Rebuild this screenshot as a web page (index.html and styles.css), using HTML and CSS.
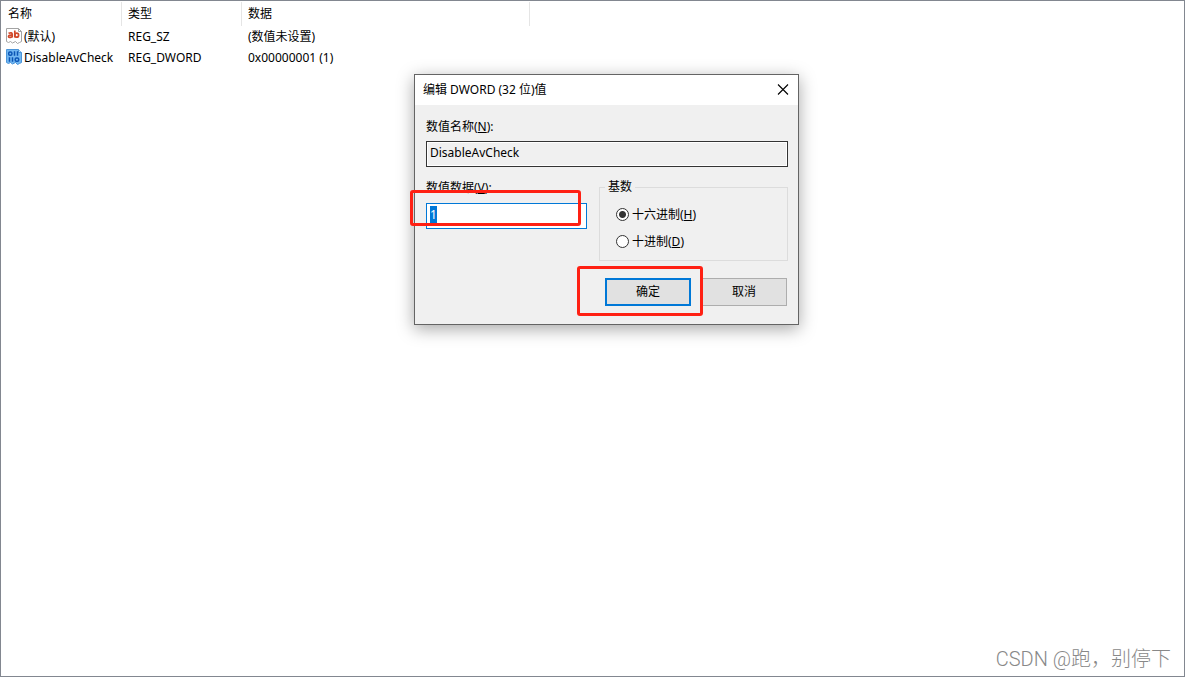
FILE: index.html
```html
<!DOCTYPE html>
<html lang="zh-CN">
<head>
<meta charset="utf-8">
<title>编辑 DWORD (32 位)值</title>
<link rel="stylesheet" href="styles.css">
</head>
<body>
<main class="pane">
  <table class="values">
    <colgroup><col class="col-name"><col class="col-type"><col class="col-data"><col></colgroup>
    <thead>
      <tr><th>名称</th><th>类型</th><th>数据</th><td></td></tr>
    </thead>
    <tbody>
      <tr>
        <td><span class="entry"><svg class="icon" width="16" height="16" viewBox="0 0 16 16" aria-hidden="true"><path d="M.5.5h12l3 3v10l-2 1-2 1-2-2-3 1.500-2-1.500-2 1-2-1z" fill="#fff" stroke="#a3a3a3"/><path d="M12.500.5v3h3" fill="none" stroke="#a3a3a3"/><g fill="none" stroke="#d2492a" stroke-width="1.700"><path d="M2.500 5.300q3.700-1.400 3.700 1v3.200M6.200 7.200q-3.700-.3-3.700 1.200 0 2 3.700.3"/><path d="M8.800 2.500v7"/><ellipse cx="10.700" cy="7.200" rx="1.900" ry="2"/></g></svg><span>(默认)</span></span></td>
        <td>REG_SZ</td><td>(数值未设置)</td><td></td>
      </tr>
      <tr>
        <td><span class="entry"><svg class="icon" width="16" height="16" viewBox="0 0 16 16" aria-hidden="true"><path d="M.5.5h12l3 3v10l-2 1-2 1-2-2-3 1.500-2-1.500-2 1-2-1z" fill="#72b7f2" stroke="#4a94d8"/><path d="M12.500.5v3h3" fill="#b5dbfa" stroke="#4a94d8"/><g fill="none" stroke="#0b55b5" stroke-width="1.500"><rect x="2.700" y="3" width="3.200" height="3.200" rx="1.300"/><path d="M8.500 2.300v4.500M11.500 2.300v4.500M3.500 8.300v4.500M6.500 8.300v4.500"/><rect x="9.200" y="9" width="3.500" height="3.200" rx="1.300"/></g></svg><span>DisableAvCheck</span></span></td>
        <td>REG_DWORD</td><td>0x00000001 (1)</td><td></td>
      </tr>
    </tbody>
  </table>

  <section class="dialog" role="dialog" aria-labelledby="dialog-title">
    <header class="titlebar">
      <h1 class="title" id="dialog-title">编辑 DWORD (32 位)值</h1>
      <button class="close" type="button" aria-label="关闭"><svg width="12" height="12" viewBox="0 0 12 12" aria-hidden="true"><path d="M1 .5l10 10M11 .5L1 10.500" fill="none" stroke="#000" stroke-width="1.100"/></svg></button>
    </header>
    <form class="form">
      <label class="label" for="value-name">数值名称(<u>N</u>):</label>
      <input class="field readonly" id="value-name" type="text" value="DisableAvCheck" readonly>
      <div class="row">
        <div class="data">
          <label class="label" for="value-data">数值数据(<u>V</u>):</label>
          <div class="edit">
            <input class="field active" id="value-data" type="text" value="1">
            <span class="mark mark-data"></span>
          </div>
        </div>
        <fieldset class="base">
          <legend>基数</legend>
          <label class="option"><input class="radio" type="radio" name="base" checked><span>十六进制(<u>H</u>)</span></label>
          <label class="option"><input class="radio" type="radio" name="base"><span>十进制(<u>D</u>)</span></label>
        </fieldset>
      </div>
      <div class="actions">
        <button class="button" type="button">取消</button>
        <div class="confirm">
          <button class="button primary" type="button">确定</button>
          <span class="mark mark-ok"></span>
        </div>
      </div>
    </form>
  </section>

  <p class="watermark">CSDN @跑，别停下</p>
</main>
<script src="script.js"></script>
</body>
</html>
```

FILE: styles.css
```css
* { box-sizing: border-box; }

body {
  margin: 0;
  background: #fff;
  color: #000;
  font: 12px/18px "Noto Sans", "Noto Sans CJK SC", sans-serif;
}

button, input { font: inherit; color: inherit; }

.pane {
  position: relative;
  min-height: 100vh;
  border: 1px solid #828790;
}

/* value list */
.values {
  width: 100%;
  table-layout: fixed;
  border-collapse: separate;
  border-spacing: 0;
  margin-top: 1px;
}
.col-name { width: 121px; }
.col-type { width: 120px; }
.col-data { width: 288px; }
.values th, .values td {
  height: 21px;
  padding: 0 6px;
  text-align: left;
  font-weight: normal;
  white-space: nowrap;
}
.values th {
  height: 24px;
  border-right: 1px solid #e5e5e5;
}
.values th:first-child { padding-left: 7px; }
.values td:first-child { padding-left: 5px; }
.entry { display: flex; align-items: flex-start; gap: 2px; }
.icon { flex: none; }

/* dialog window */
.dialog {
  position: absolute;
  left: 413px;
  top: 73px;
  width: 385px;
  background: #f0f0f0;
  border: 1px solid #646464;
  box-shadow: 0 4px 16px rgba(0, 0, 0, 0.35);
}
.titlebar {
  display: flex;
  align-items: center;
  justify-content: space-between;
  height: 30px;
  padding: 0 9px 0 8px;
  background: #fff;
}
.title { margin: 0; font-size: 12px; font-weight: normal; }
.close {
  display: flex;
  padding: 0;
  border: 0;
  background: none;
}
.form { padding: 12px 10px 18px 11px; }
.label { display: block; padding-top: 1px; margin-bottom: 5px; }
.field {
  display: block;
  width: 100%;
  height: 26px;
  padding: 0 3px 4px;
  border: 1px solid #333;
  border-radius: 0;
  outline: 0;
}
.readonly {
  background: #f0f0f0;
  box-shadow: inset 0 0 0 1px #fff;
}
.active {
  border-color: #0078d7;
  background: #fff;
}
.active::selection { background: #0078d7; color: #fff; }
.row { display: flex; gap: 12px; margin-top: 11px; }
.data { flex: 1; }
.data .label { margin-bottom: 6px; }
.edit, .confirm { position: relative; }

.base {
  width: 189px;
  margin: 0;
  padding: 8px 16px 9px;
  border: 1px solid #dcdcdc;
}
.base legend { margin-left: -11px; padding: 0 3px; }
.option { display: flex; align-items: center; gap: 3px; }
.option span { padding-top: 2px; }
.option + .option { margin-top: 7px; }
.radio {
  appearance: none;
  width: 13px;
  height: 13px;
  margin: 0;
  border: 1px solid #333;
  border-radius: 50%;
  background: #fff;
}
.radio:checked { background: radial-gradient(circle, #333 3px, #fff 4px); }

.actions {
  display: flex;
  flex-direction: row-reverse;
  gap: 10px;
  margin-top: 17px;
  padding-right: 1px;
}
.button {
  display: block;
  width: 86px;
  height: 28px;
  padding: 0;
  border: 1px solid #adadad;
  background: #e1e1e1;
}
.primary { border: 2px solid #0078d7; }

/* red highlight frames */
.mark {
  position: absolute;
  border: 3px solid #ff2013;
  border-radius: 3px;
  pointer-events: none;
}
.mark-data { inset: -13px 6px 3px -16px; }
.mark-ok { inset: -12px -12px -10px -28px; }

.watermark {
  position: absolute;
  right: 13px;
  bottom: 3px;
  margin: 0;
  color: #888;
  font: 300 20px/28px Roboto, "Noto Sans CJK TC", sans-serif;
}
```

FILE: script.js
```js
const valueData = document.getElementById("value-data");
valueData.focus();
valueData.select();
```
